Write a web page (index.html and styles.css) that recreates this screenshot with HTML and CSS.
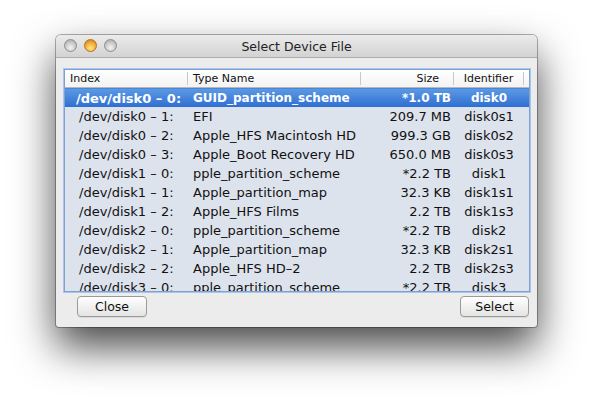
FILE: index.html
```html
<!DOCTYPE html>
<html lang="en">
<head>
    <meta charset="UTF-8">
    <title>Select Device File</title>
    <link rel="stylesheet" href="styles.css">
</head>
<body>
    <div class="window">
        <div class="titlebar">
            <div class="lights">
                <span class="light"></span>
                <span class="light active"></span>
                <span class="light"></span>
            </div>
            <div class="title">Select Device File</div>
        </div>

        <div class="content">
            <div class="list">
                <div class="row head">
                    <div class="c-index">Index</div>
                    <div class="c-type">Type Name</div>
                    <div class="c-size">Size</div>
                    <div class="c-id">Identifier</div>
                    <div class="c-end"></div>
                </div>
                <div class="rows">
                    <div class="row selected">
                        <div class="c-index">/dev/disk0 – 0:</div>
                        <div class="c-type">GUID_partition_scheme</div>
                        <div class="c-size">*1.0 TB</div>
                        <div class="c-id">disk0</div>
                    </div>
                    <div class="row">
                        <div class="c-index">/dev/disk0 – 1:</div>
                        <div class="c-type">EFI</div>
                        <div class="c-size">209.7 MB</div>
                        <div class="c-id">disk0s1</div>
                    </div>
                    <div class="row">
                        <div class="c-index">/dev/disk0 – 2:</div>
                        <div class="c-type">Apple_HFS Macintosh HD</div>
                        <div class="c-size">999.3 GB</div>
                        <div class="c-id">disk0s2</div>
                    </div>
                    <div class="row">
                        <div class="c-index">/dev/disk0 – 3:</div>
                        <div class="c-type">Apple_Boot Recovery HD</div>
                        <div class="c-size">650.0 MB</div>
                        <div class="c-id">disk0s3</div>
                    </div>
                    <div class="row">
                        <div class="c-index">/dev/disk1 – 0:</div>
                        <div class="c-type">pple_partition_scheme</div>
                        <div class="c-size">*2.2 TB</div>
                        <div class="c-id">disk1</div>
                    </div>
                    <div class="row">
                        <div class="c-index">/dev/disk1 – 1:</div>
                        <div class="c-type">Apple_partition_map</div>
                        <div class="c-size">32.3 KB</div>
                        <div class="c-id">disk1s1</div>
                    </div>
                    <div class="row">
                        <div class="c-index">/dev/disk1 – 2:</div>
                        <div class="c-type">Apple_HFS Films</div>
                        <div class="c-size">2.2 TB</div>
                        <div class="c-id">disk1s3</div>
                    </div>
                    <div class="row">
                        <div class="c-index">/dev/disk2 – 0:</div>
                        <div class="c-type">pple_partition_scheme</div>
                        <div class="c-size">*2.2 TB</div>
                        <div class="c-id">disk2</div>
                    </div>
                    <div class="row">
                        <div class="c-index">/dev/disk2 – 1:</div>
                        <div class="c-type">Apple_partition_map</div>
                        <div class="c-size">32.3 KB</div>
                        <div class="c-id">disk2s1</div>
                    </div>
                    <div class="row">
                        <div class="c-index">/dev/disk2 – 2:</div>
                        <div class="c-type">Apple_HFS HD–2</div>
                        <div class="c-size">2.2 TB</div>
                        <div class="c-id">disk2s3</div>
                    </div>
                    <div class="row">
                        <div class="c-index">/dev/disk3 – 0:</div>
                        <div class="c-type">pple_partition_scheme</div>
                        <div class="c-size">*2.2 TB</div>
                        <div class="c-id">disk3</div>
                    </div>
                </div>
            </div>

            <div class="buttons">
                <button class="btn btn-close">Close</button>
                <button class="btn btn-select">Select</button>
            </div>
        </div>
    </div>
</body>
</html>
```

FILE: styles.css
```css
html, body {
    margin: 0;
    background-color: #fff;
}
body {
    min-height: 406px;
    box-sizing: border-box;
    padding: 35px 0 0 56px;
    font-family: "DejaVu Sans", sans-serif;
    color: #111;
}
.window {
    width: 481px;
    height: 292px;
    background-color: #ececec;
    border-radius: 5px 5px 3px 3px;
    box-shadow: 0 0 0 1px rgba(0, 0, 0, 0.3), 0 20px 42px rgba(0, 0, 0, 0.72);
    display: flex;
    flex-direction: column;
    overflow: hidden;
}
.titlebar {
    height: 22px;
    flex: none;
    position: relative;
    display: flex;
    align-items: center;
    justify-content: center;
    background: linear-gradient(#ebebeb, #d3d3d3);
    border-bottom: 1px solid #ababab;
}
.lights {
    position: absolute;
    left: 8px;
    top: 4px;
    display: flex;
    gap: 7px;
}
.light {
    width: 13px;
    height: 13px;
    border-radius: 50%;
    box-sizing: border-box;
    border: 1px solid #8c8c8c;
    background: radial-gradient(circle at 50% 70%, #f4f4f4 0%, #c8c8c8 55%, #a4a4a4 100%);
}
.light.active {
    border-color: #b0721a;
    background: radial-gradient(circle at 50% 75%, #ffe48c 0%, #f5b13a 50%, #c57d1c 100%);
}
.title {
    font-size: 12.5px;
    color: #222;
}
.content {
    flex: 1;
    display: flex;
    flex-direction: column;
    padding: 10px 6px 0 7px;
}
.list {
    height: 221px;
    border: 1px solid #7da2cf;
    box-shadow: 0 0 0 1px #a9c6ea;
    background-color: #dde3ed;
    overflow: hidden;
    margin: 1px 1px 0 1px;
}
.row {
    display: grid;
    grid-template-columns: 123px 173px 93px 70px 1fr;
    height: 19px;
    align-items: center;
    font-size: 13px;
    white-space: nowrap;
}
.row > div {
    overflow: hidden;
}
.head {
    height: 17px;
    font-size: 11px;
    background: linear-gradient(#ffffff, #f3f3f3);
    border-bottom: 1px solid #b7b7b7;
}
.head > div {
    border-right: 1px solid #c8c8c8;
    height: 13px;
    line-height: 13px;
}
.head .c-index {
    padding-left: 5px;
}
.head .c-size {
    text-align: right;
    padding-right: 14px;
}
.head .c-end {
    border-right: none;
}
.c-index {
    padding-left: 14px;
}
.c-type {
    padding-left: 5px;
}
.c-size {
    text-align: right;
    padding-right: 3px;
}
.c-id {
    text-align: center;
}
.selected {
    background: linear-gradient(#5b99e4, #2f6fd2);
    border-top: 1px solid #4a86d8;
    height: 18px;
    color: #fff;
    font-weight: bold;
    font-size: 12px;
}
.selected .c-index {
    padding-left: 11px;
    font-size: 13px;
}
.buttons {
    display: flex;
    justify-content: space-between;
    padding: 4px 2px 0 14px;
}
.btn {
    height: 21px;
    font-family: "DejaVu Sans", sans-serif;
    font-size: 12.5px;
    color: #111;
    background: linear-gradient(#ffffff, #f1f1f1 50%, #e4e4e4);
    border: 1px solid #9a9a9a;
    border-radius: 4px;
    box-shadow: 0 1px 0 rgba(0, 0, 0, 0.08);
    padding: 0;
}
.btn-close {
    width: 70px;
}
.btn-select {
    width: 69px;
}
```
